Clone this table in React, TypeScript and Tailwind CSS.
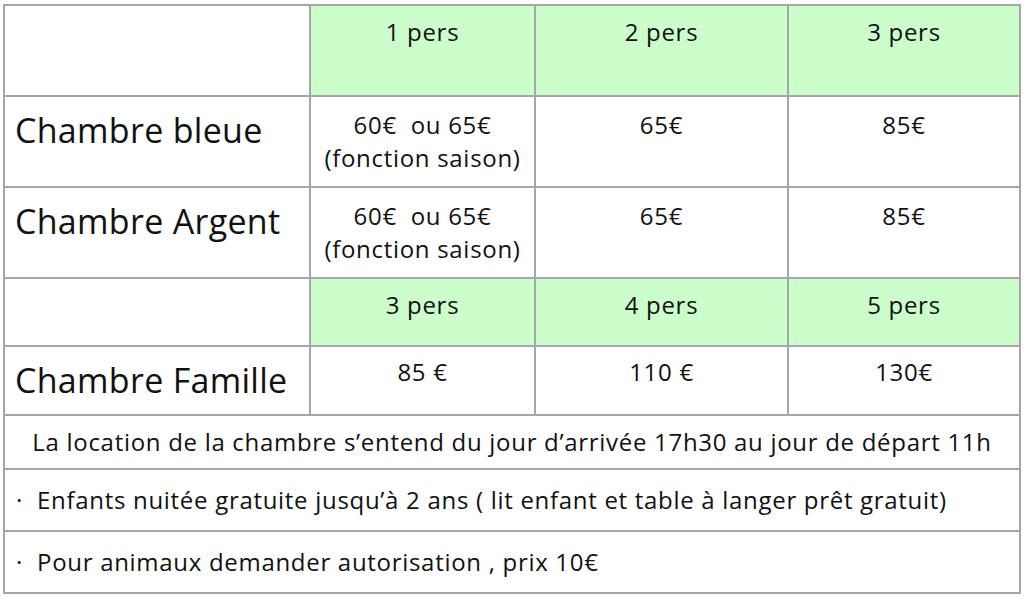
import React from "react";

const cell = "border-2 border-[#a6a6a6] align-top text-center";
const body = "text-[24px] leading-[33px] tracking-[0.7px]";
const name = "!text-left pl-[10px] pt-[13px] text-[34px] leading-[40px] tracking-[0.3px]";

function Header({ labels, h }: { labels: string[]; h: string }) {
  return (
    <tr className={h}>
      <td className={`${cell} bg-white`} />
      {labels.map((l) => (
        <td key={l} className={`${cell} ${body} bg-[#ccfecc] pt-[10px] !leading-[32px]`}>
          {l}
        </td>
      ))}
    </tr>
  );
}

function PriceRow({ label, prices }: { label: string; prices: React.ReactNode[] }) {
  return (
    <tr className="h-[91px]">
      <td className={`${cell} ${name}`}>{label}</td>
      {prices.map((p, i) => (
        <td key={i} className={`${cell} ${body} pt-[11px]`}>
          {p}
        </td>
      ))}
    </tr>
  );
}

export default function App() {
  const saison = (
    <>
      60€&nbsp; ou 65€
      <br />
      (fonction saison)
    </>
  );

  return (
    <div className="w-[1024px] h-[597px] bg-white pl-[3px] pt-[4px] text-[#111] font-['Open_Sans','Liberation_Sans',sans-serif]">
      <table className="border-collapse table-fixed w-[1016px]">
        <colgroup>
          <col className="w-[306px]" />
          <col className="w-[225px]" />
          <col className="w-[253px]" />
          <col className="w-[232px]" />
        </colgroup>
        <tbody>
          <Header labels={["1 pers", "2 pers", "3 pers"]} h="h-[91px]" />
          <PriceRow label="Chambre bleue" prices={[saison, "65€", "85€"]} />
          <PriceRow label="Chambre Argent" prices={[saison, "65€", "85€"]} />
          <Header labels={["3 pers", "4 pers", "5 pers"]} h="h-[68px]" />
          <tr className="h-[69px]">
            <td className={`${cell} ${name}`}>Chambre Famille</td>
            {["85 €", "110 €", "130€"].map((p) => (
              <td key={p} className={`${cell} ${body} pt-[8px]`}>
                {p}
              </td>
            ))}
          </tr>
          <tr className="h-[54px]">
            <td colSpan={4} className={`${cell} ${body} pt-[9px]`}>
              La location de la chambre s’entend du jour d’arrivée 17h30 au jour de départ 11h
            </td>
          </tr>
          <tr className="h-[62px]">
            <td colSpan={4} className={`${cell} ${body} !text-left pl-[11px] pt-[13px]`}>
              <span className="inline-block w-[21px]">·</span>Enfants nuitée gratuite jusqu’à 2 ans ( lit enfant et table à langer prêt gratuit)
            </td>
          </tr>
          <tr className="h-[62px]">
            <td colSpan={4} className={`${cell} ${body} !text-left pl-[11px] pt-[13px]`}>
              <span className="inline-block w-[21px]">·</span>Pour animaux demander autorisation , prix 10€
            </td>
          </tr>
        </tbody>
      </table>
    </div>
  );
}
